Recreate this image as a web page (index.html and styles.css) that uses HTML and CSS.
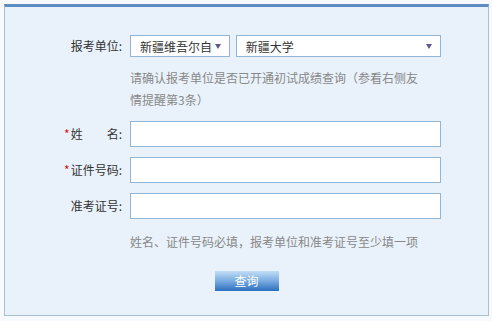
FILE: index.html
```html
<!DOCTYPE html>
<html>
<head>
    <meta charset="utf-8">
    <title>初试成绩查询</title>
    <link rel="stylesheet" href="styles.css">
</head>
<body>
<div class="panel">
    <form class="query-form">
        <div class="label">报考单位:</div>
        <div class="field">
            <div class="selects">
                <div class="select select-province">
                    <span class="select-text">新疆维吾尔自</span>
                    <span class="select-arrow"></span>
                </div>
                <div class="select select-school">
                    <span class="select-text">新疆大学</span>
                    <span class="select-arrow"></span>
                </div>
            </div>
            <p class="hint hint-unit">请确认报考单位是否已开通初试成绩查询（参看右侧友情提醒第3条）</p>
        </div>

        <div class="label"><span class="req">*</span>姓&emsp;&emsp;名:</div>
        <div class="field"><input class="text-input" type="text"></div>

        <div class="label"><span class="req">*</span>证件号码:</div>
        <div class="field"><input class="text-input" type="text"></div>

        <div class="label">准考证号:</div>
        <div class="field"><input class="text-input" type="text"></div>

        <div class="label"></div>
        <div class="field">
            <p class="hint hint-bottom">姓名、证件号码必填，报考单位和准考证号至少填一项</p>
        </div>
    </form>
    <div class="actions">
        <button class="btn-query" type="button">查询</button>
    </div>
</div>
</body>
</html>
```

FILE: styles.css
```css
/* page */
body {
    margin: 0;
    background: #f6f9fd;
    font-family: "Noto Sans CJK SC", "Liberation Sans", sans-serif;
    font-size: 12px;
    color: #333;
}

.panel {
    box-sizing: border-box;
    width: 485px;
    height: 312px;
    margin: 4px 0 0 4px;
    background: #e9f2fb;
    border: 1px solid #aabed4;
    border-top: 3px solid #5b8cc2;
    padding-top: 28px;
}

/* form grid */
.query-form {
    display: grid;
    grid-template-columns: 118px 311px;
    column-gap: 7px;
    row-gap: 10px;
    margin: 0;
}

.query-form .label {
    text-align: right;
    line-height: 22px;
    white-space: nowrap;
    padding-right: 1px;
}

.query-form .label .req {
    color: #d7101c;
    margin-right: 1px;
}

.field {
    display: flex;
    flex-direction: column;
}

/* selects */
.selects {
    display: flex;
    gap: 6px;
}

.select {
    box-sizing: border-box;
    height: 22px;
    display: flex;
    align-items: center;
    justify-content: space-between;
    background: #fff;
    border: 1px solid #92b6d8;
    padding: 0 8px 0 9px;
}

.select-province {
    width: 100px;
}

.select-school {
    width: 206px;
}

.select-arrow {
    width: 0;
    height: 0;
    border-left: 3px solid transparent;
    border-right: 3px solid transparent;
    border-top: 5px solid #5c5a86;
}

/* hints */
.hint {
    margin: 0;
    color: #888;
    line-height: 22px;
}

.hint-unit {
    width: 292px;
    margin-top: 10px;
}

.hint-bottom {
    margin-top: 2px;
    white-space: nowrap;
}

/* inputs */
.text-input {
    box-sizing: border-box;
    width: 311px;
    height: 26px;
    margin: 0;
    border: 1px solid #92b6d8;
    background: #fff;
    font: inherit;
    outline: none;
}

.query-form .label:has(+ .field > .text-input) {
    line-height: 26px;
}

/* button */
.actions {
    display: flex;
    justify-content: center;
    margin-top: 18px;
}

.btn-query {
    width: 64px;
    height: 20px;
    padding: 0;
    border: 0;
    background: linear-gradient(#c3ddf5, #7fb1e4 45%, #2e6fbd);
    color: #fff;
    font-family: inherit;
    font-size: 12px;
    line-height: 20px;
    cursor: pointer;
}
```
